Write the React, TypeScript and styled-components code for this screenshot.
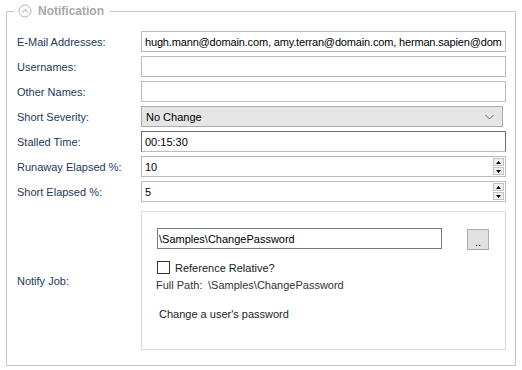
import React from 'react';
import styled, { createGlobalStyle, css } from 'styled-components';

const GlobalStyle = createGlobalStyle`
  body {
    margin: 0;
    background: #ffffff;
    font-family: "Liberation Sans", Arial, sans-serif;
    font-size: 11px;
  }
`;

const Frame = styled.fieldset`
  box-sizing: border-box;
  width: 510px;
  margin: 2px 0 0 6px;
  padding: 11px 9px 15px 10px;
  border: 1px solid #c6c6c6;
  min-inline-size: 0;
`;

const Legend = styled.legend`
  display: flex;
  align-items: center;
  gap: 6px;
  height: 18px;
  margin-left: -3px;
  padding: 0 6px 0 4px;
  font-size: 12px;
  font-weight: bold;
  color: #a8a8a8;
`;

const Form = styled.div`
  display: flex;
  flex-direction: column;
  gap: 4px;
`;

const Row = styled.div<{ $gapTop?: number }>`
  display: grid;
  grid-template-columns: 124px 1fr;
  align-items: center;
  min-height: 21px;
  margin-top: ${(p) => p.$gapTop ?? 0}px;
`;

const Label = styled.span`
  color: #1e395b;
  white-space: nowrap;
`;

const boxBase = css`
  box-sizing: border-box;
  height: 21px;
  display: flex;
  align-items: center;
  overflow: hidden;
  white-space: nowrap;
  color: #000000;
`;

const TextBox = styled.div<{ $focused?: boolean }>`
  ${boxBase};
  padding: 0 1px 0 3px;
  background: #ffffff;
  border: 1px solid ${(p) => (p.$focused ? '#6e6e6e' : '#bcbcbc')};
  border-bottom-color: #bcbcbc;
`;

const Value = styled.span<{ $tight?: boolean }>`
  flex: 1;
  overflow: hidden;
  letter-spacing: ${(p) => (p.$tight ? '-0.16px' : 'normal')};
`;

const Combo = styled.div`
  ${boxBase};
  margin-right: 3px;
  padding: 0 8px 0 4px;
  background: #e5e5e5;
  border: 1px solid #acacac;
`;

const Spinner = styled.div`
  display: flex;
  flex-direction: column;
  gap: 1px;
  width: 11px;
`;

const SpinButton = styled.div`
  box-sizing: border-box;
  height: 8px;
  display: flex;
  align-items: center;
  justify-content: center;
  background: #f0f0f0;
  border: 1px solid #c2c2c2;
`;

const Panel = styled.div`
  box-sizing: border-box;
  height: 139px;
  padding: 16px 0 0 15px;
  border: 1px solid #dadada;
  display: flex;
  flex-direction: column;
`;

const PathRow = styled.div`
  display: flex;
  align-items: flex-start;
`;

const PathBox = styled.div`
  ${boxBase};
  width: 285px;
  padding-left: 1px;
  border: 1px solid #7a7a7a;
`;

const BrowseButton = styled.div`
  box-sizing: border-box;
  width: 22px;
  height: 21px;
  margin: 1px 0 0 25px;
  padding-top: 4px;
  display: flex;
  align-items: center;
  justify-content: center;
  background: #e1e1e1;
  border: 1px solid #adadad;
  color: #000000;
`;

const CheckRow = styled.div`
  display: flex;
  align-items: center;
  gap: 5px;
  margin-top: 11px;
  color: #1a1a1a;
`;

const CheckBox = styled.span`
  box-sizing: border-box;
  width: 13px;
  height: 13px;
  border: 1px solid #333333;
  background: #ffffff;
`;

const PathInfo = styled.div`
  display: flex;
  margin: 5px 0 0 -1px;
  color: #333333;
`;

const PathKey = styled.span`
  width: 52px;
`;

const Description = styled.div`
  margin: 17px 0 0 2px;
  color: #222222;
`;

const CollapseIcon = () => (
  <svg width="14" height="14" viewBox="0 0 14 14">
    <circle cx="7" cy="7" r="6" fill="none" stroke="#b4b4b4" strokeWidth="1" />
    <path d="M4.3 8.4 L7 5.7 L9.7 8.4" fill="none" stroke="#b4b4b4" strokeWidth="1.1" />
  </svg>
);

const Chevron = () => (
  <svg width="9" height="6" viewBox="0 0 9 6">
    <path d="M0.5 1 L4.5 5 L8.5 1" fill="none" stroke="#6a6a6a" strokeWidth="1" />
  </svg>
);

const Tri = ({ up }: { up?: boolean }) => (
  <svg width="5" height="3" viewBox="0 0 5 3">
    <path d={up ? 'M0 3 L2.5 0 L5 3 Z' : 'M0 0 L2.5 3 L5 0 Z'} fill="#000000" />
  </svg>
);

const NumberBox = ({ value }: { value: string }) => (
  <TextBox>
    <Value>{value}</Value>
    <Spinner>
      <SpinButton><Tri up /></SpinButton>
      <SpinButton><Tri /></SpinButton>
    </Spinner>
  </TextBox>
);

export default function App() {
  return (
    <>
      <GlobalStyle />
      <Frame>
        <Legend>
          <CollapseIcon />
          Notification
        </Legend>
        <Form>
          <Row>
            <Label>E-Mail Addresses:</Label>
            <TextBox>
              <Value $tight>hugh.mann@domain.com, amy.terran@domain.com, herman.sapien@dom</Value>
            </TextBox>
          </Row>
          <Row>
            <Label>Usernames:</Label>
            <TextBox />
          </Row>
          <Row>
            <Label>Other Names:</Label>
            <TextBox />
          </Row>
          <Row>
            <Label>Short Severity:</Label>
            <Combo>
              <Value>No Change</Value>
              <Chevron />
            </Combo>
          </Row>
          <Row>
            <Label>Stalled Time:</Label>
            <TextBox $focused>
              <Value>00:15:30</Value>
            </TextBox>
          </Row>
          <Row>
            <Label>Runaway Elapsed %:</Label>
            <NumberBox value="10" />
          </Row>
          <Row>
            <Label>Short Elapsed %:</Label>
            <NumberBox value="5" />
          </Row>
          <Row $gapTop={5}>
            <Label>Notify Job:</Label>
            <Panel>
              <PathRow>
                <PathBox>\Samples\ChangePassword</PathBox>
                <BrowseButton>..</BrowseButton>
              </PathRow>
              <CheckRow>
                <CheckBox />
                Reference Relative?
              </CheckRow>
              <PathInfo>
                <PathKey>Full Path:</PathKey>
                <span>\Samples\ChangePassword</span>
              </PathInfo>
              <Description>Change a user&apos;s password</Description>
            </Panel>
          </Row>
        </Form>
      </Frame>
    </>
  );
}
